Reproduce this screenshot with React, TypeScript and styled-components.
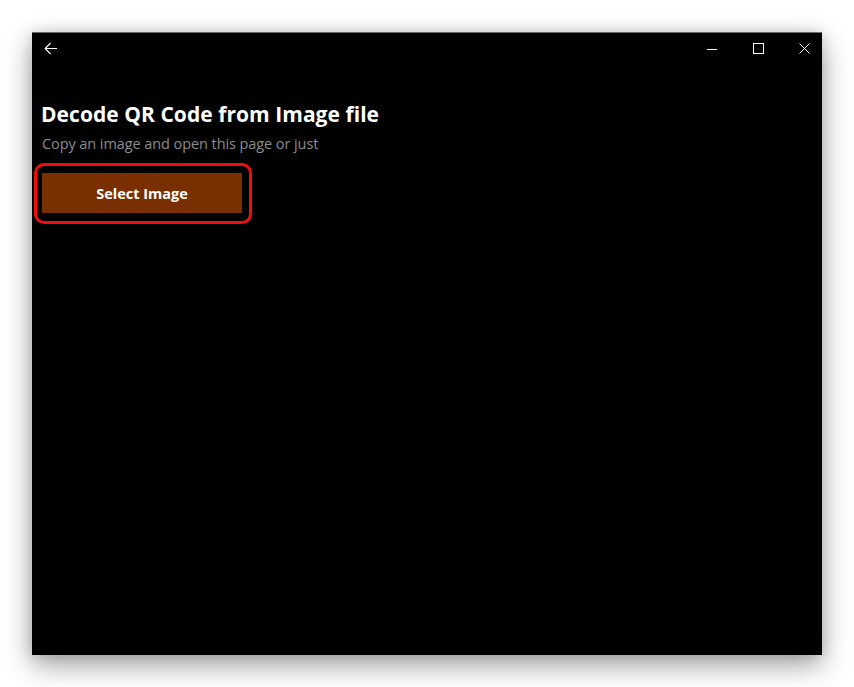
import React from "react";
import styled, { createGlobalStyle } from "styled-components";

const Global = createGlobalStyle`
  html, body { margin: 0; padding: 0; background: #ffffff; }
  body { font-family: "Open Sans", "Noto Sans", sans-serif; }
`;

const Page = styled.div`
  width: 854px;
  height: 687px;
  padding: 32px;
  box-sizing: border-box;
`;

const Window = styled.div`
  width: 790px;
  height: 623px;
  background: #000;
  border-top: 1px solid #6a6a6a;
  box-sizing: border-box;
  box-shadow: 0 10px 26px rgba(0, 0, 0, 0.38), 0 0 12px rgba(0, 0, 0, 0.12);
  display: flex;
  flex-direction: column;
  overflow: hidden;
`;

const TitleBar = styled.div`
  height: 31px;
  display: flex;
  align-items: center;
  justify-content: space-between;
`;

const Controls = styled.div`
  display: flex;
  height: 100%;
  margin-right: -5px;
`;

const BarButton = styled.div<{ $w?: number }>`
  width: ${(p) => p.$w ?? 46}px;
  height: 100%;
  display: flex;
  align-items: center;
  justify-content: center;
  color: #fff;
`;

const Content = styled.div`
  padding: 36px 10px 0 9px;
  display: flex;
  flex-direction: column;
  align-items: flex-start;
`;

const Title = styled.h1`
  margin: 0;
  font-family: "Open Sans", sans-serif;
  font-weight: 700;
  font-size: 21px;
  line-height: 28px;
  color: #fff;
  letter-spacing: 0.05px;
`;

const Subtitle = styled.p`
  margin: 6px 0 0 1px;
  font-family: "Open Sans", sans-serif;
  font-size: 14.5px;
  line-height: 20px;
  color: #8c8c8c;
  letter-spacing: -0.08px;
`;

const Highlight = styled.div`
  margin: 9px 0 0 -7px;
  border: 3px solid #f10d0d;
  border-radius: 10px;
  padding: 7px 7px 8px 5px;
`;

const PrimaryButton = styled.button`
  width: 200px;
  height: 40px;
  border: none;
  background: #7a2f00;
  color: #fff;
  font-family: "Open Sans", sans-serif;
  font-weight: 700;
  font-size: 14.5px;
  letter-spacing: 0;
  display: flex;
  align-items: center;
  justify-content: center;
  padding: 0;
`;

export default function App() {
  return (
    <>
      <Global />
      <Page>
        <Window>
          <TitleBar>
            <BarButton $w={38}>
              <svg width="14" height="13" viewBox="0 0 14 13" fill="none" stroke="#fff" strokeWidth="1.1">
                <path d="M13 6.5H1.2M6.6 1L1.1 6.5L6.6 12" />
              </svg>
            </BarButton>
            <Controls>
              <BarButton>
                <svg width="10" height="10" viewBox="0 0 10 10" stroke="#fff" strokeWidth="1">
                  <path d="M0 5.5H10" />
                </svg>
              </BarButton>
              <BarButton>
                <svg width="11" height="11" viewBox="0 0 11 11" fill="none" stroke="#fff" strokeWidth="1">
                  <rect x="0.5" y="0.5" width="10" height="10" />
                </svg>
              </BarButton>
              <BarButton>
                <svg width="11" height="11" viewBox="0 0 11 11" fill="none" stroke="#fff" strokeWidth="1">
                  <path d="M0.5 0.5L10.5 10.5M10.5 0.5L0.5 10.5" />
                </svg>
              </BarButton>
            </Controls>
          </TitleBar>
          <Content>
            <Title>Decode QR Code from Image file</Title>
            <Subtitle>Copy an image and open this page or just</Subtitle>
            <Highlight>
              <PrimaryButton>Select Image</PrimaryButton>
            </Highlight>
          </Content>
        </Window>
      </Page>
    </>
  );
}
